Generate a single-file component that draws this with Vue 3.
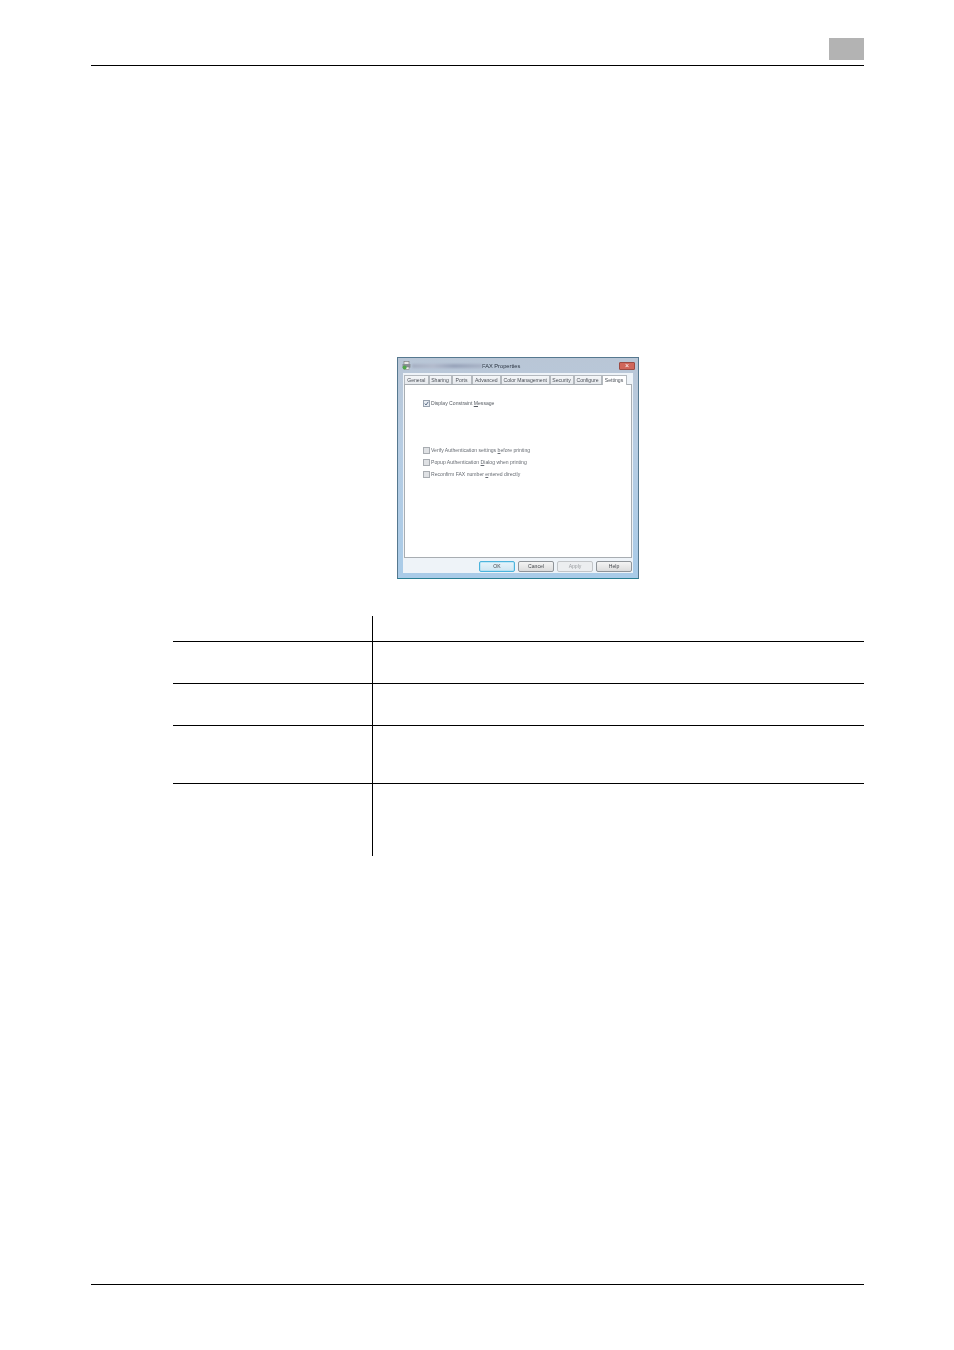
<script setup>
const tabs = [
  { label: 'General', w: 24.5 },
  { label: 'Sharing', w: 23 },
  { label: 'Ports', w: 20 },
  { label: 'Advanced', w: 29.5 },
  { label: 'Color Management', w: 48.5 },
  { label: 'Security', w: 24 },
  { label: 'Configure', w: 28 },
  { label: 'Settings', w: 25, active: true }
]
const rows = [
  { h: 25 }, { h: 41 }, { h: 41 }, { h: 57 }, { h: 72, last: true }
]
const options = [
  { pre: 'Verify Authentication settings ', key: 'b', post: 'efore printing' },
  { pre: 'Popup Authentication ', key: 'D', post: 'ialog when printing' },
  { pre: 'Reconfirm FAX number ', key: 'e', post: 'ntered directly' }
]
const buttons = [
  { label: 'OK', cls: 'primary' },
  { label: 'Cancel', cls: '' },
  { label: 'Apply', cls: 'disabled' },
  { label: 'Help', cls: '' }
]
</script>

<template>
  <div class="page">
    <header class="head">
      <div class="chapter"></div>
    </header>

    <section class="figure">
      <div class="dialog">
        <div class="titlebar">
          <svg class="printer" width="9" height="9" viewBox="0 0 9 9">
            <rect x="2" y="0.5" width="5" height="3" fill="#e8e8e8" stroke="#777" stroke-width="0.6" />
            <rect x="0.5" y="3" width="8" height="3.6" fill="#8a8f96" />
            <rect x="2" y="6" width="5" height="2.5" fill="#f2f2f2" stroke="#777" stroke-width="0.5" />
            <circle cx="2.6" cy="6.6" r="2" fill="#4fa84a" />
          </svg>
          <span class="smear"></span>
          <span class="title">FAX Properties</span>
          <span class="close"><span class="x">×</span></span>
        </div>
        <div class="body">
          <div class="tabs">
            <div
              v-for="t in tabs"
              :key="t.label"
              class="tab"
              :class="{ active: t.active }"
              :style="{ width: t.w + 'px' }"
            >{{ t.label }}</div>
          </div>
          <div class="panel">
            <label class="opt first">
              <span class="box checked">
                <svg width="5" height="5" viewBox="0 0 5 5"><path d="M0.8 2.6 L2 4 L4.3 0.8" fill="none" stroke="#4d5f7a" stroke-width="0.9" /></svg>
              </span>
              <span>Display Constraint <u>M</u>essage</span>
            </label>
            <div class="group">
              <label v-for="o in options" :key="o.pre" class="opt muted">
                <span class="box"></span>
                <span>{{ o.pre }}<u>{{ o.key }}</u>{{ o.post }}</span>
              </label>
            </div>
          </div>
          <div class="actions">
            <div v-for="b in buttons" :key="b.label" class="btn" :class="b.cls">{{ b.label }}</div>
          </div>
        </div>
      </div>
    </section>

    <section class="table">
      <div
        v-for="(r, i) in rows"
        :key="i"
        class="row"
        :class="{ last: r.last }"
        :style="{ height: r.h + 'px' }"
      >
        <div class="cell-a"></div>
        <div class="cell-b"></div>
      </div>
    </section>

    <footer class="foot"></footer>
  </div>
</template>

<style>
html, body { margin: 0; background: #fff; }
</style>

<style scoped>
.page {
  width: 954px;
  height: 1350px;
  box-sizing: border-box;
  padding: 38px 90px 0 91px;
  background: #fff;
  display: flex;
  flex-direction: column;
  font-family: "Liberation Sans", sans-serif;
}
.head {
  height: 28px;
  box-sizing: border-box;
  border-bottom: 1px solid #000;
  display: flex;
  justify-content: flex-end;
  align-items: flex-start;
}
.chapter {
  width: 35px;
  height: 22px;
  background: #b3b3b3;
}
.figure {
  margin-top: 291px;
  display: flex;
  padding-left: 306px;
}
.dialog {
  width: 242px;
  height: 222px;
  box-sizing: border-box;
  border: 1px solid #56788f;
  border-bottom-color: #2a7f93;
  background: linear-gradient(#b9c6d6, #b7cde3 40%, #a9cbe8);
  display: flex;
  flex-direction: column;
  filter: blur(0.45px);
}
.titlebar {
  height: 15px;
  display: flex;
  align-items: center;
  padding: 0 3px 0 4px;
  font-size: 5.7px;
  color: #2a3340;
}
.printer { flex: none; }
.smear {
  width: 70px;
  height: 4px;
  margin-left: 1px;
  background: linear-gradient(90deg, #a5afc2, #b3bacc 30%, #98a3ba 60%, #a9b3c6);
  filter: blur(0.8px);
}
.close {
  margin-left: auto;
  width: 14px;
  height: 6px;
  background: #d0665a;
  border: 1px solid #9c4a43;
  display: flex;
  align-items: center;
  justify-content: center;
  border-radius: 1px;
}
.x { color: #fff; font-size: 7px; line-height: 6px; }
.body {
  flex: 1;
  margin: 0 5px 5px 5px;
  padding: 1px 1px 0;
  background: #eef3f8;
  display: flex;
  flex-direction: column;
  min-height: 0;
}
.tabs {
  display: flex;
  align-items: flex-end;
  height: 10px;
  position: relative;
  z-index: 1;
}
.tab {
  height: 9px;
  box-sizing: border-box;
  border: 1px solid #b4b9be;
  border-bottom: 0;
  background: linear-gradient(#f4f6f8, #e6e9ed);
  font-size: 5.1px;
  line-height: 8px;
  text-align: center;
  color: #4a4f57;
  white-space: nowrap;
}
.tab.active {
  height: 10px;
  background: #fff;
  margin-bottom: -1px;
}
.panel {
  height: 174px;
  box-sizing: border-box;
  background: #fff;
  border: 1px solid #a8adb2;
  padding: 14px 0 0 18px;
  font-size: 5.1px;
  color: #565b62;
}
.opt {
  display: flex;
  align-items: center;
  gap: 1px;
  height: 8px;
  white-space: nowrap;
}
.group {
  margin-top: 39px;
  display: flex;
  flex-direction: column;
  gap: 4px;
}
.muted { color: #666b72; }
.box {
  width: 7px;
  height: 7px;
  box-sizing: border-box;
  border: 1px solid #a8acb1;
  background: #dfe1e4;
  display: flex;
  align-items: center;
  justify-content: center;
  flex: none;
}
.box.checked { background: #e8edf3; border-color: #98a2ae; }
.actions {
  display: flex;
  justify-content: flex-end;
  gap: 3px;
  padding: 3px 0 0;
}
.btn {
  width: 36px;
  height: 11px;
  box-sizing: border-box;
  border: 1px solid #8f9499;
  border-radius: 2px;
  background: linear-gradient(#f4f4f4, #dcdcdc);
  font-size: 5.1px;
  line-height: 9px;
  text-align: center;
  color: #44474c;
}
.btn.primary {
  border-color: #4cb3dc;
  background: linear-gradient(#e6f4fb, #cfe6f2);
  box-shadow: inset 0 0 0 0.5px #9cdcf2;
}
.btn.disabled {
  border-color: #c2c5c8;
  background: #eceef0;
  color: #9a9da1;
}
.table {
  margin-top: 37px;
  margin-left: 82px;
}
.row {
  display: flex;
  border-bottom: 1px solid #000;
}
.row.last { border-bottom: 0; }
.cell-a {
  width: 199px;
  border-right: 1px solid #000;
}
.cell-b { flex: 1; }
.foot {
  margin-top: 428px;
  height: 1px;
  background: #000;
}
</style>
